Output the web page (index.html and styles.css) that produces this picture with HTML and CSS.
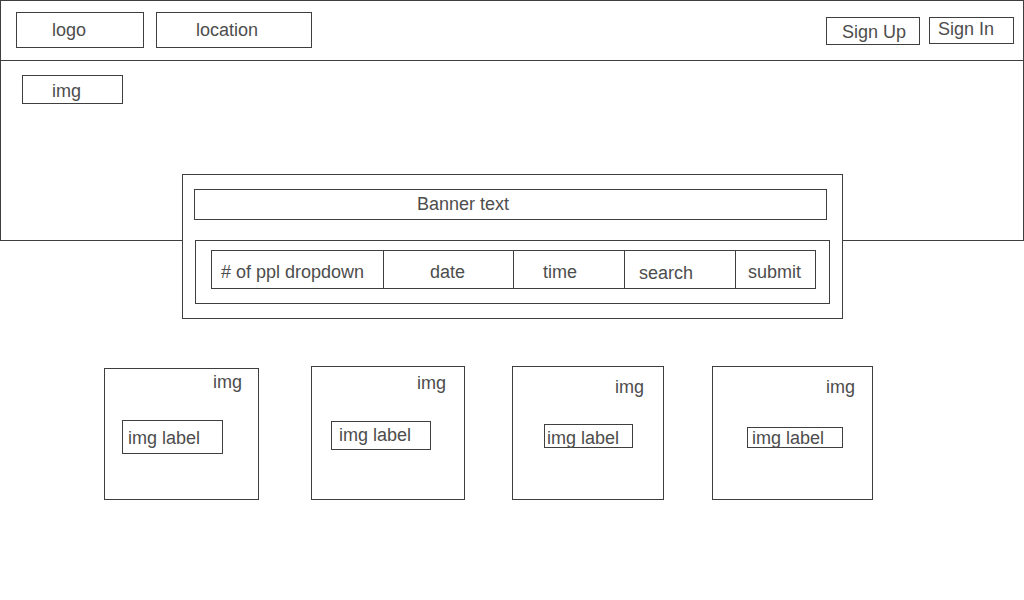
FILE: index.html
```html
<!DOCTYPE html>
<html lang="en">
<head>
<meta charset="utf-8">
<title>Wireframe</title>
<link rel="stylesheet" href="styles.css">
</head>
<body>
<div class="frame">
  <header class="topbar">
    <div class="box logo">logo</div>
    <div class="box location">location</div>
    <div class="box signup">Sign Up</div>
    <div class="box signin">Sign In</div>
  </header>
  <section class="hero">
    <div class="box hero-img">img</div>
    <div class="panel">
      <div class="box banner">Banner text</div>
      <div class="form-box">
        <div class="fields">
          <div class="field f-ppl">#&nbsp;of ppl dropdown</div>
          <div class="field f-date">date</div>
          <div class="field f-time">time</div>
          <div class="field f-search">search</div>
          <div class="field f-submit">submit</div>
        </div>
      </div>
    </div>
  </section>
</div>
<section class="cards">
  <div class="card card-1">
    <div class="card-img">img</div>
    <div class="box card-label">img label</div>
  </div>
  <div class="card card-2">
    <div class="card-img">img</div>
    <div class="box card-label">img label</div>
  </div>
  <div class="card card-3">
    <div class="card-img">img</div>
    <div class="box card-label">img label</div>
  </div>
  <div class="card card-4">
    <div class="card-img">img</div>
    <div class="box card-label">img label</div>
  </div>
</section>
</body>
</html>
```
FILE: styles.css
```css
* { box-sizing: border-box; }

body {
  margin: 0;
  background: #fff;
  color: #4d4d4d;
  font-family: "Liberation Sans", Arial, sans-serif;
  font-size: 18px;
  line-height: 20px;
}

.box {
  border: 1px solid #3f3f3f;
  background: #fff;
  white-space: nowrap;
}

/* outer frame */
.frame {
  width: 1024px;
  height: 241px;
  border: 1px solid #3f3f3f;
}

.topbar {
  height: 60px;
  border-bottom: 1px solid #3f3f3f;
  display: flex;
  align-items: flex-start;
}

.logo {
  margin: 11px 0 0 15px;
  width: 128px;
  height: 36px;
  padding: 7px 0 0 35px;
}

.location {
  margin: 11px 0 0 12px;
  width: 156px;
  height: 36px;
  padding: 7px 0 0 39px;
}

.signup {
  margin: 16px 0 0 auto;
  width: 94px;
  height: 28px;
  padding: 4px 0 0 15px;
}

.signin {
  margin: 16px 9px 0 9px;
  width: 85px;
  height: 27px;
  padding: 1px 0 0 8px;
}

/* hero */
.hero-img {
  margin: 14px 0 0 21px;
  width: 101px;
  height: 29px;
  padding: 5px 0 0 29px;
}

.panel {
  margin: 70px 0 0 181px;
  width: 661px;
  height: 145px;
  border: 1px solid #3f3f3f;
  background: #fff;
}

.banner {
  margin: 14px 0 0 11px;
  width: 633px;
  height: 31px;
  padding: 4px 0 0 222px;
}

.form-box {
  margin: 20px 0 0 12px;
  width: 635px;
  height: 64px;
  border: 1px solid #3f3f3f;
}

.fields {
  margin: 9px 0 0 15px;
  display: flex;
  height: 39px;
}

.field {
  height: 39px;
  border: 1px solid #3f3f3f;
  border-right: none;
  padding-top: 11px;
  white-space: nowrap;
}

.f-ppl { width: 172px; padding-left: 9px; }
.f-date { width: 130px; padding-left: 46px; }
.f-time { width: 111px; padding-left: 29px; }
.f-search { width: 111px; padding-left: 14px; padding-top: 12px; }
.f-submit { width: 81px; padding-left: 12px; border-right: 1px solid #3f3f3f; }

/* cards */
.cards {
  display: flex;
  align-items: flex-end;
  padding-top: 125px;
}

.card {
  border: 1px solid #3f3f3f;
  height: 134px;
  display: flex;
  flex-direction: column;
  align-items: flex-start;
}

.card-img {
  align-self: stretch;
  text-align: right;
}

.card-label {
  white-space: nowrap;
}

.card-1 { margin-left: 104px; width: 155px; height: 132px; }
.card-1 .card-img { padding: 3px 16px 0 0; }
.card-1 .card-label { margin: 28px 0 0 17px; width: 101px; height: 34px; padding: 7px 0 0 5px; }

.card-2 { margin-left: 52px; width: 154px; }
.card-2 .card-img { padding: 6px 18px 0 0; }
.card-2 .card-label { margin: 28px 0 0 19px; width: 100px; height: 29px; padding: 3px 0 0 7px; }

.card-3 { margin-left: 47px; width: 152px; }
.card-3 .card-img { padding: 10px 19px 0 0; }
.card-3 .card-label { margin: 27px 0 0 31px; width: 89px; height: 24px; padding: 3px 0 0 2px; }

.card-4 { margin-left: 48px; width: 161px; }
.card-4 .card-img { padding: 10px 17px 0 0; }
.card-4 .card-label { margin: 30px 0 0 34px; width: 96px; height: 21px; padding: 0 0 0 4px; }
```
